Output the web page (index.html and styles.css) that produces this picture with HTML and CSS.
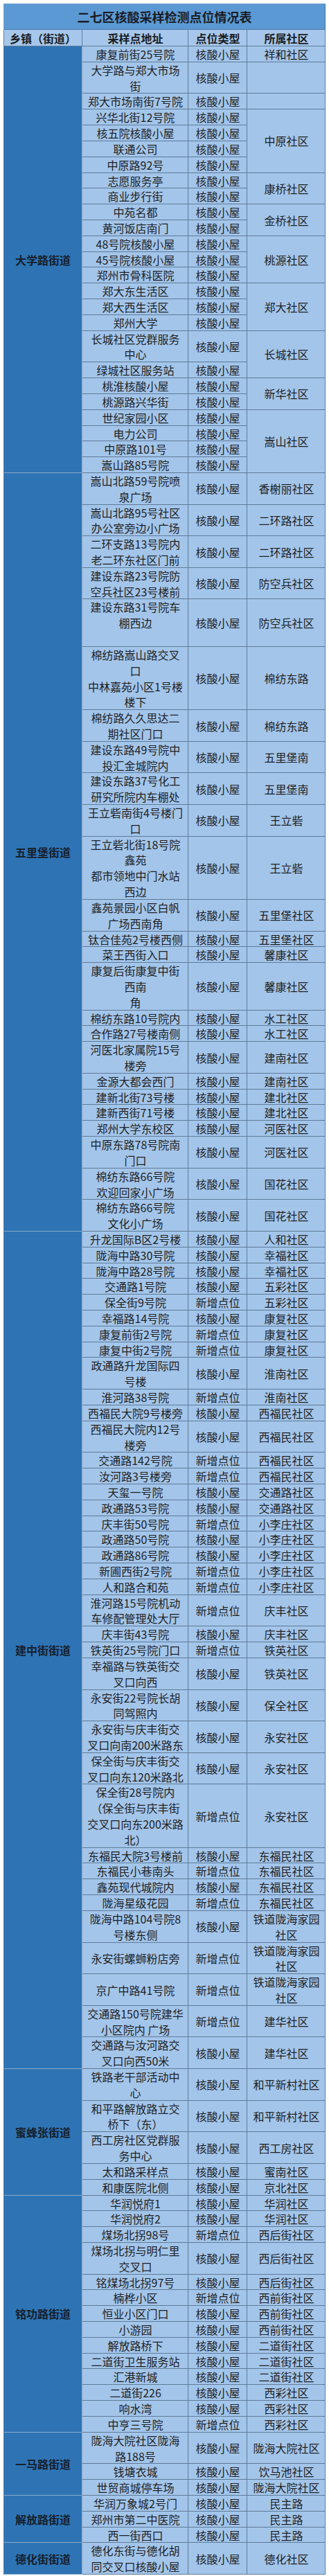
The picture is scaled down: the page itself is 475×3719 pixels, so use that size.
FILE: index.html
```html
<!DOCTYPE html>
<html lang="zh-CN">
<head>
<meta charset="utf-8">
<title>二七区核酸采样检测点位情况表</title>
<link rel="stylesheet" href="styles.css">
</head>
<body>
<table class="sheet">
<colgroup><col class="c1"><col class="c2"><col class="c3"><col class="c4"></colgroup>
<thead>
<tr><td class="title" colspan="4">二七区核酸采样检测点位情况表</td></tr>
<tr class="hd"><td class="first">乡镇（街道）</td><td>采样点地址</td><td>点位类型</td><td>所属社区</td></tr>
</thead>
<tbody>
<tr><td class="grp" rowspan="25">大学路街道</td><td>康复前街25号院</td><td>核酸小屋</td><td>祥和社区</td></tr>
<tr><td>大学路与郑大市场<br>街</td><td>核酸小屋</td><td></td></tr>
<tr><td>郑大市场南街7号院</td><td>核酸小屋</td><td></td></tr>
<tr><td>兴华北街12号院</td><td>核酸小屋</td><td rowspan="4">中原社区</td></tr>
<tr><td>核五院核酸小屋</td><td>核酸小屋</td></tr>
<tr><td>联通公司</td><td>核酸小屋</td></tr>
<tr><td>中原路92号</td><td>核酸小屋</td></tr>
<tr><td>志愿服务亭</td><td>核酸小屋</td><td rowspan="2">康桥社区</td></tr>
<tr><td>商业步行街</td><td>核酸小屋</td></tr>
<tr><td>中苑名都</td><td>核酸小屋</td><td rowspan="2">金桥社区</td></tr>
<tr><td>黄河饭店南门</td><td>核酸小屋</td></tr>
<tr><td>48号院核酸小屋</td><td>核酸小屋</td><td rowspan="3">桃源社区</td></tr>
<tr><td>45号院核酸小屋</td><td>核酸小屋</td></tr>
<tr><td>郑州市骨科医院</td><td>核酸小屋</td></tr>
<tr><td>郑大东生活区</td><td>核酸小屋</td><td rowspan="3">郑大社区</td></tr>
<tr><td>郑大西生活区</td><td>核酸小屋</td></tr>
<tr><td>郑州大学</td><td>核酸小屋</td></tr>
<tr><td>长城社区党群服务<br>中心</td><td>核酸小屋</td><td rowspan="2">长城社区</td></tr>
<tr><td>绿城社区服务站</td><td>核酸小屋</td></tr>
<tr><td>桃淮核酸小屋</td><td>核酸小屋</td><td rowspan="2">新华社区</td></tr>
<tr><td>桃源路兴华街</td><td>核酸小屋</td></tr>
<tr><td>世纪家园小区</td><td>核酸小屋</td><td rowspan="4">嵩山社区</td></tr>
<tr><td>电力公司</td><td>核酸小屋</td></tr>
<tr><td>中原路101号</td><td>核酸小屋</td></tr>
<tr><td>嵩山路85号院</td><td>核酸小屋</td></tr>

<tr><td class="grp" rowspan="25">五里堡街道</td><td>嵩山北路59号院喷<br>泉广场</td><td>核酸小屋</td><td>香榭丽社区</td></tr>
<tr><td>嵩山北路95号社区<br>办公室旁边小广场</td><td>核酸小屋</td><td>二环路社区</td></tr>
<tr><td>二环支路13号院内<br>老二环东社区门前</td><td>核酸小屋</td><td>二环路社区</td></tr>
<tr><td>建设东路23号院防<br>空兵社区23号楼前</td><td>核酸小屋</td><td>防空兵社区</td></tr>
<tr><td>建设东路31号院车<br>棚西边<br>&nbsp;</td><td>核酸小屋</td><td>防空兵社区</td></tr>
<tr><td>棉纺路嵩山路交叉<br>口<br>中林嘉苑小区1号楼<br>楼下</td><td>核酸小屋</td><td>棉纺东路</td></tr>
<tr><td>棉纺路久久思达二<br>期社区门口</td><td>核酸小屋</td><td>棉纺东路</td></tr>
<tr><td>建设东路49号院中<br>投汇金城院内</td><td>核酸小屋</td><td>五里堡南</td></tr>
<tr><td>建设东路37号化工<br>研究所院内车棚处</td><td>核酸小屋</td><td>五里堡南</td></tr>
<tr><td>王立砦南街4号楼门<br>口</td><td>核酸小屋</td><td>王立砦</td></tr>
<tr><td>王立砦北街18号院<br>鑫苑<br>都市领地中门水站<br>西边</td><td>核酸小屋</td><td>王立砦</td></tr>
<tr><td>鑫苑景园小区白帆<br>广场西南角</td><td>核酸小屋</td><td>五里堡社区</td></tr>
<tr><td>钛合佳苑2号楼西侧</td><td>核酸小屋</td><td>五里堡社区</td></tr>
<tr><td>菜王西街入口</td><td>核酸小屋</td><td>馨康社区</td></tr>
<tr><td>康复后街康复中街<br>西南<br>角</td><td>核酸小屋</td><td>馨康社区</td></tr>
<tr><td>棉纺东路10号院内</td><td>核酸小屋</td><td>水工社区</td></tr>
<tr><td>合作路27号楼南侧</td><td>核酸小屋</td><td>水工社区</td></tr>
<tr><td>河医北家属院15号<br>楼旁</td><td>核酸小屋</td><td>建南社区</td></tr>
<tr><td>金源大都会西门</td><td>核酸小屋</td><td>建南社区</td></tr>
<tr><td>建新北街73号楼</td><td>核酸小屋</td><td>建北社区</td></tr>
<tr><td>建新西街71号楼</td><td>核酸小屋</td><td>建北社区</td></tr>
<tr><td>郑州大学东校区</td><td>核酸小屋</td><td>河医社区</td></tr>
<tr><td>中原东路78号院南<br>门口</td><td>核酸小屋</td><td>河医社区</td></tr>
<tr><td>棉纺东路66号院<br>欢迎回家小广场</td><td>核酸小屋</td><td>国花社区</td></tr>
<tr><td>棉纺东路66号院<br>文化小广场</td><td>核酸小屋</td><td>国花社区</td></tr>

<tr><td class="grp" rowspan="38">建中街街道</td><td>升龙国际B区2号楼</td><td>核酸小屋</td><td>人和社区</td></tr>
<tr><td>陇海中路30号院</td><td>核酸小屋</td><td>幸福社区</td></tr>
<tr><td>陇海中路28号院</td><td>核酸小屋</td><td>幸福社区</td></tr>
<tr><td>交通路1号院</td><td>核酸小屋</td><td>五彩社区</td></tr>
<tr><td>保全街9号院</td><td>新增点位</td><td>五彩社区</td></tr>
<tr><td>幸福路14号院</td><td>核酸小屋</td><td>康复社区</td></tr>
<tr><td>康复前街2号院</td><td>新增点位</td><td>康复社区</td></tr>
<tr><td>康复中街2号院</td><td>新增点位</td><td>康复社区</td></tr>
<tr><td>政通路升龙国际四<br>号楼</td><td>核酸小屋</td><td>淮南社区</td></tr>
<tr><td>淮河路38号院</td><td>新增点位</td><td>淮南社区</td></tr>
<tr><td>西福民大院9号楼旁</td><td>核酸小屋</td><td>西福民社区</td></tr>
<tr><td>西福民大院内12号<br>楼旁</td><td>核酸小屋</td><td>西福民社区</td></tr>
<tr><td>交通路142号院</td><td>新增点位</td><td>西福民社区</td></tr>
<tr><td>汝河路3号楼旁</td><td>新增点位</td><td>西福民社区</td></tr>
<tr><td>天玺一号院</td><td>核酸小屋</td><td>交通路社区</td></tr>
<tr><td>政通路53号院</td><td>核酸小屋</td><td>交通路社区</td></tr>
<tr><td>庆丰街50号院</td><td>新增点位</td><td>小李庄社区</td></tr>
<tr><td>政通路50号院</td><td>核酸小屋</td><td>小李庄社区</td></tr>
<tr><td>政通路86号院</td><td>核酸小屋</td><td>小李庄社区</td></tr>
<tr><td>新圃西街2号院</td><td>新增点位</td><td>小李庄社区</td></tr>
<tr><td>人和路合和苑</td><td>新增点位</td><td>小李庄社区</td></tr>
<tr><td>淮河路15号院机动<br>车修配管理处大厅</td><td>新增点位</td><td>庆丰社区</td></tr>
<tr><td>庆丰街43号院</td><td>核酸小屋</td><td>庆丰社区</td></tr>
<tr><td>铁英街25号院门口</td><td>新增点位</td><td>铁英社区</td></tr>
<tr><td>幸福路与铁英街交<br>叉口向西</td><td>核酸小屋</td><td>铁英社区</td></tr>
<tr><td>永安街22号院长胡<br>同驾照内</td><td>核酸小屋</td><td>保全社区</td></tr>
<tr><td>永安街与庆丰街交<br>叉口向南200米路东</td><td>核酸小屋</td><td>永安社区</td></tr>
<tr><td>保全街与庆丰街交<br>叉口向东120米路北</td><td>核酸小屋</td><td>永安社区</td></tr>
<tr><td>保全街28号院内<br>（保全街与庆丰街<br>交叉口向东200米路<br>北）</td><td>新增点位</td><td>永安社区</td></tr>
<tr><td>东福民大院3号楼前</td><td>核酸小屋</td><td>东福民社区</td></tr>
<tr><td>东福民小巷南头</td><td>新增点位</td><td>东福民社区</td></tr>
<tr><td>鑫苑现代城院内</td><td>核酸小屋</td><td>东福民社区</td></tr>
<tr><td>陇海星级花园</td><td>新增点位</td><td>东福民社区</td></tr>
<tr><td>陇海中路104号院8<br>号楼东侧</td><td>核酸小屋</td><td>铁道陇海家园<br>社区</td></tr>
<tr><td>永安街螺蛳粉店旁</td><td>新增点位</td><td>铁道陇海家园<br>社区</td></tr>
<tr><td>京广中路41号院</td><td>新增点位</td><td>铁道陇海家园<br>社区</td></tr>
<tr><td>交通路150号院建华<br>小区院内 广场</td><td>新增点位</td><td>建华社区</td></tr>
<tr><td>交通路与汝河路交<br>叉口向西50米</td><td>核酸小屋</td><td>建华社区</td></tr>

<tr><td class="grp" rowspan="5">蜜蜂张街道</td><td>铁路老干部活动中<br>心</td><td>核酸小屋</td><td>和平新村社区</td></tr>
<tr><td>和平路解放路立交<br>桥下（东）</td><td>核酸小屋</td><td>和平新村社区</td></tr>
<tr><td>西工房社区党群服<br>务中心</td><td>核酸小屋</td><td>西工房社区</td></tr>
<tr><td>太和路采样点</td><td>核酸小屋</td><td>蜜南社区</td></tr>
<tr><td>和康医院北侧</td><td>核酸小屋</td><td>京北社区</td></tr>

<tr><td class="grp" rowspan="14">铭功路街道</td><td>华润悦府1</td><td>核酸小屋</td><td>华润社区</td></tr>
<tr><td>华润悦府2</td><td>核酸小屋</td><td>华润社区</td></tr>
<tr><td>煤场北拐98号</td><td>新增点位</td><td>西后街社区</td></tr>
<tr><td>煤场北拐与明仁里<br>交叉口</td><td>核酸小屋</td><td>西后街社区</td></tr>
<tr><td>铭煤场北拐97号</td><td>核酸小屋</td><td>西后街社区</td></tr>
<tr><td>楠桦小区</td><td>新增点位</td><td>西前街社区</td></tr>
<tr><td>恒业小区门口</td><td>核酸小屋</td><td>西前街社区</td></tr>
<tr><td>小游园</td><td>核酸小屋</td><td>西前街社区</td></tr>
<tr><td>解放路桥下</td><td>核酸小屋</td><td>二道街社区</td></tr>
<tr><td>二道街卫生服务站</td><td>核酸小屋</td><td>二道街社区</td></tr>
<tr><td>汇港新城</td><td>核酸小屋</td><td>二道街社区</td></tr>
<tr><td>二道街226</td><td>核酸小屋</td><td>西彩社区</td></tr>
<tr><td>响水湾</td><td>核酸小屋</td><td>西彩社区</td></tr>
<tr><td>中亨三号院</td><td>新增点位</td><td>西彩社区</td></tr>

<tr><td class="grp" rowspan="3">一马路街道</td><td>陇海大院社区陇海<br>路188号</td><td>核酸小屋</td><td>陇海大院社区</td></tr>
<tr><td>钱塘衣城</td><td>核酸小屋</td><td>饮马池社区</td></tr>
<tr><td>世贸商城停车场</td><td>核酸小屋</td><td>陇海大院社区</td></tr>

<tr><td class="grp" rowspan="3">解放路街道</td><td>华润万象城2号门</td><td>核酸小屋</td><td>民主路</td></tr>
<tr><td>郑州市第二中医院</td><td>核酸小屋</td><td>民主路</td></tr>
<tr><td>西一街西口</td><td>核酸小屋</td><td>民主路</td></tr>

<tr><td class="grp" rowspan="1">德化街街道</td><td>德化东街与德化胡<br>同交叉口核酸小屋</td><td>核酸小屋</td><td>德化社区</td></tr>
</tbody>
</table>
</body>
</html>
```
FILE: styles.css
```css
html, body {
  margin: 0;
  padding: 0;
  background: #ffffff;
}

body {
  font-family: "Noto Sans CJK SC", "Noto Sans", sans-serif;
  color: #1e1f24;
}

.sheet {
  margin: 5px 0 0 5px;
  width: 465px;
  table-layout: fixed;
  border-collapse: separate;
  border-spacing: 0;
}

.c1 { width: 114px; }
.c2 { width: 153px; }
.c3 { width: 85px; }
.c4 { width: 113px; }

.sheet td {
  padding: 0;
  text-align: center;
  vertical-align: middle;
  white-space: nowrap;
  font-size: 16px;
  line-height: 22.81px;
  background: #a3c5ea;
  box-shadow: inset -1px -1px 0 #5f7b98;
}

.sheet td.title {
  height: 38px;
  font-size: 18px;
  font-weight: 700;
  line-height: 24px;
  background: #5a99d4;
  color: #1a1d24;
  box-shadow: inset 1px 1px 0 #7aa6d2, inset -1px -1px 0 #4a78a6;
}

.hd td {
  height: 24px;
  line-height: 24px;
  font-weight: 700;
  background: #a6c7eb;
  color: #1a1d24;
}

.hd td.first {
  box-shadow: inset 1px 0 0 #5f7b98, inset -1px -1px 0 #5f7b98;
}

.sheet td.grp {
  background: #2e74b5;
  font-weight: 700;
  color: #16202c;
  box-shadow: inset 1px 0 0 #5f7b98, inset -1px -1px 0 #8aa9c9;
}
```
